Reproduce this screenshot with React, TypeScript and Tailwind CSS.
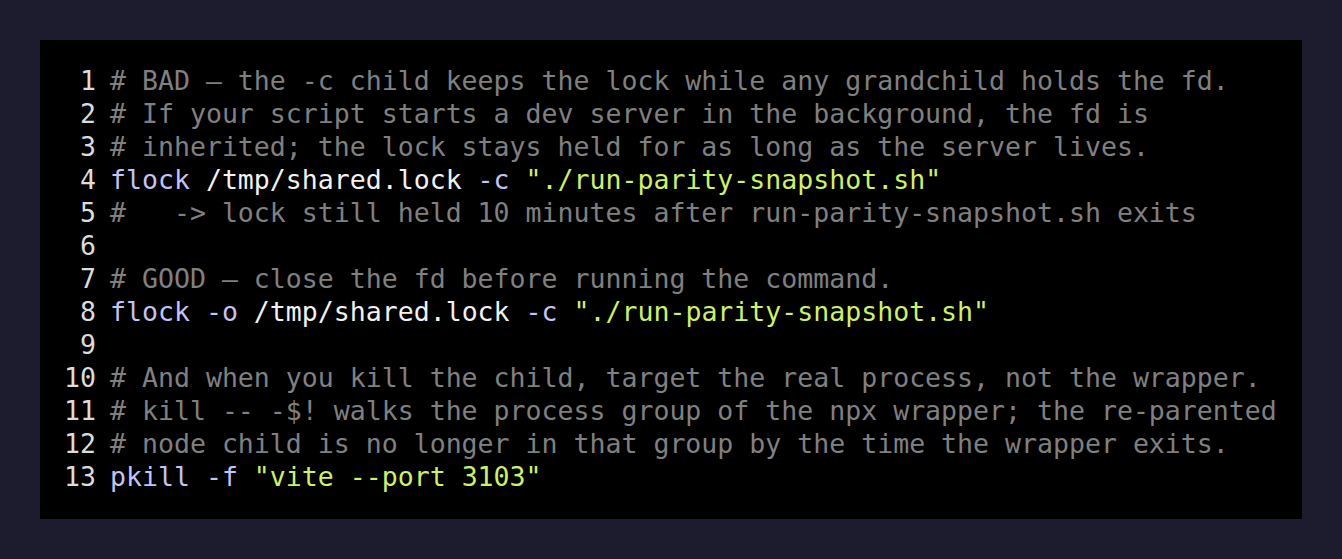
type Tok = { t: string; c?: "cm" | "kw" | "str" };

const lines: Tok[][] = [
  [{ t: "# BAD — the -c child keeps the lock while any grandchild holds the fd.", c: "cm" }],
  [{ t: "# If your script starts a dev server in the background, the fd is", c: "cm" }],
  [{ t: "# inherited; the lock stays held for as long as the server lives.", c: "cm" }],
  [
    { t: "flock", c: "kw" },
    { t: " /tmp/shared.lock " },
    { t: "-c", c: "kw" },
    { t: " " },
    { t: '"./run-parity-snapshot.sh"', c: "str" },
  ],
  [{ t: "#   -> lock still held 10 minutes after run-parity-snapshot.sh exits", c: "cm" }],
  [],
  [{ t: "# GOOD — close the fd before running the command.", c: "cm" }],
  [
    { t: "flock", c: "kw" },
    { t: " " },
    { t: "-o", c: "kw" },
    { t: " /tmp/shared.lock " },
    { t: "-c", c: "kw" },
    { t: " " },
    { t: '"./run-parity-snapshot.sh"', c: "str" },
  ],
  [],
  [{ t: "# And when you kill the child, target the real process, not the wrapper.", c: "cm" }],
  [{ t: "# kill -- -$! walks the process group of the npx wrapper; the re-parented", c: "cm" }],
  [{ t: "# node child is no longer in that group by the time the wrapper exits.", c: "cm" }],
  [
    { t: "pkill", c: "kw" },
    { t: " " },
    { t: "-f", c: "kw" },
    { t: " " },
    { t: '"vite --port 3103"', c: "str" },
  ],
];

const colors = {
  cm: "text-[#808080]",
  kw: "text-[#c3c3f5]",
  str: "text-[#cdf26a]",
};

export default function App() {
  return (
    <div className="w-full min-h-screen bg-[#1c1c2e] p-10">
      {/* code panel */}
      <div
        className="bg-black pt-6 pb-[26px] pl-6 text-[26.56px] leading-[33px] text-[#f2f2f2] whitespace-pre"
        style={{ fontFamily: '"DejaVu Sans Mono", monospace' }}
      >
        {lines.map((line, i) => (
          <div key={i} className="flex">
            <span className="w-8 text-right text-[#dcdcdc] mr-[14px]">{i + 1}</span>
            <span>
              {line.map((tok, j) => (
                <span key={j} className={tok.c ? colors[tok.c] : undefined}>
                  {tok.t}
                </span>
              ))}
            </span>
          </div>
        ))}
      </div>
    </div>
  );
}
